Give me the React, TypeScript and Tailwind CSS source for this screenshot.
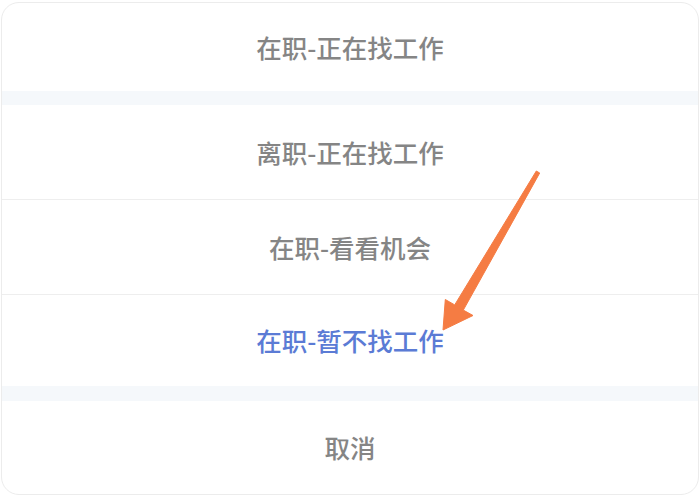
import React from 'react';

const options = [
    { label: '离职-正在找工作', h: 'h-[94px]' },
    { label: '在职-看看机会', h: 'h-[95px]' },
    { label: '在职-暂不找工作', h: 'h-[92px]', active: true },
];

export default function App() {
    return (
        <div className="relative w-[700px] h-[495px] overflow-hidden bg-white pt-[2px] font-['Noto_Sans_CJK_SC','Noto_Sans',sans-serif]">
            <div className="mx-[1px] rounded-[18px] border border-[#ececec] overflow-hidden bg-white">
                <div className="h-[88px] flex items-center justify-center text-[25.5px] font-medium text-[#858585]">
                    在职-正在找工作
                </div>
                <div className="h-[14px] bg-[#f5f8fb]" />
                {options.map((o, i) => (
                    <div
                        key={o.label}
                        className={`${o.h} flex items-center justify-center text-[25.5px] font-medium ${
                            o.active ? 'text-[#5b7bd5]' : 'text-[#858585]'
                        } ${i > 0 ? 'border-t border-[#eeeeee]' : ''}`}
                    >
                        {o.label}
                    </div>
                ))}
                <div className="h-[15px] bg-[#f5f8fb]" />
                <div className="h-[93px] flex items-center justify-center text-[25.5px] font-medium text-[#858585]">
                    取消
                </div>
            </div>

            {/* annotation arrow */}
            <svg className="absolute left-0 top-0" width="700" height="495" viewBox="0 0 700 495">
                <polygon
                    points="536.3,171 539.7,173 463.3,310.1 473,315.5 443,330 445.3,299.5 454.7,304.9"
                    fill="#f57c43"
                    strokeLinejoin="round"
                    stroke="#f57c43"
                    strokeWidth="1"
                />
            </svg>
        </div>
    );
}
